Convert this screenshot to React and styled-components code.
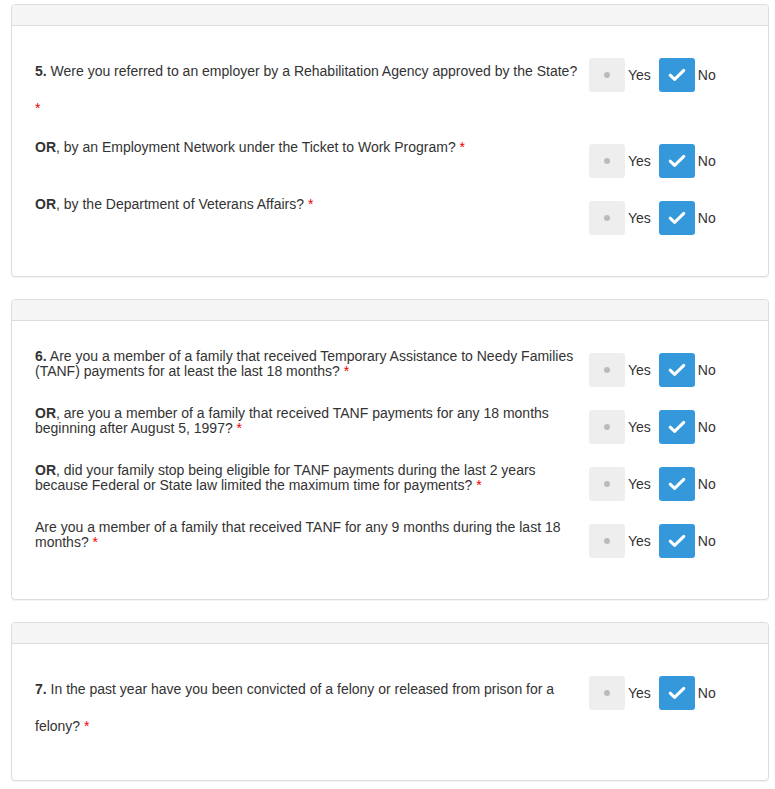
import React from "react";
import styled, { createGlobalStyle } from "styled-components";

const Global = createGlobalStyle`
  html, body { margin: 0; padding: 0; background: #fff; }
  body {
    font-family: "Liberation Sans", Arial, sans-serif;
    font-size: 14px;
    color: #333;
  }
  * { box-sizing: border-box; }
`;

const Page = styled.div`
  padding: 4px 6px 0 11px;
`;

const Panel = styled.section`
  border: 1px solid #ddd;
  border-radius: 4px;
  background: #fff;
  box-shadow: 0 1px 1px rgba(0, 0, 0, 0.05);
  margin-bottom: 22px;
  overflow: hidden;
`;

const Heading = styled.div`
  height: 21px;
  background: #f5f5f5;
  border-bottom: 1px solid #ddd;
`;

const Body = styled.div`
  padding: 27px 23px 23px 23px;
`;

const Row = styled.div`
  display: flex;
  align-items: flex-start;
  margin-bottom: 18px;
`;

const Question = styled.div`
  flex: 0 0 546px;
  width: 546px;
  line-height: ${(p) => (p.$tall ? "37px" : "15px")};
  margin-top: ${(p) => (p.$tall ? "0" : "1px")};
  margin-bottom: ${(p) => (p.$tall ? "-6px" : "0")};
`;

const Req = styled.span`
  color: #e00;
`;

const Choices = styled.div`
  display: flex;
  align-items: center;
  margin-left: 8px;
  margin-top: 5px;
  gap: 8px;
`;

const Choice = styled.label`
  display: flex;
  align-items: center;
  gap: 3px;
  line-height: 15px;
`;

const Box = styled.span`
  width: 36px;
  height: 34px;
  border-radius: 3px;
  background: ${(p) => (p.$on ? "#3498db" : "#eee")};
  display: flex;
  align-items: center;
  justify-content: center;
`;

const Dot = styled.span`
  width: 6px;
  height: 6px;
  border-radius: 50%;
  background: #bbb;
`;

const Check = () => (
  <svg width="18" height="14" viewBox="0 0 18 14" aria-hidden="true">
    <path
      d="M2.2 7.2 L6.6 11.4 L15.8 2.4"
      fill="none"
      stroke="#fff"
      strokeWidth="3"
      strokeLinecap="round"
      strokeLinejoin="round"
    />
  </svg>
);

const YesNo = () => (
  <Choices>
    <Choice>
      <Box>
        <Dot />
      </Box>
      Yes
    </Choice>
    <Choice>
      <Box $on>
        <Check />
      </Box>
      No
    </Choice>
  </Choices>
);

const Item = ({ tall, children }) => (
  <Row>
    <Question $tall={tall}>
      {children} <Req>*</Req>
    </Question>
    <YesNo />
  </Row>
);

export default function App() {
  return (
    <>
      <Global />
      <Page>
        <Panel>
          <Heading />
          <Body>
            <Item tall>
              <b>5.</b> Were you referred to an employer by a Rehabilitation Agency approved by the State?
            </Item>
            <Item>
              <b>OR</b>, by an Employment Network under the Ticket to Work Program?
            </Item>
            <Item>
              <b>OR</b>, by the Department of Veterans Affairs?
            </Item>
          </Body>
        </Panel>
        <Panel>
          <Heading />
          <Body>
            <Item>
              <b>6.</b> Are you a member of a family that received Temporary Assistance to Needy Families (TANF) payments for at least the last 18 months?
            </Item>
            <Item>
              <b>OR</b>, are you a member of a family that received TANF payments for any 18 months beginning after August 5, 1997?
            </Item>
            <Item>
              <b>OR</b>, did your family stop being eligible for TANF payments during the last 2 years because Federal or State law limited the maximum time for payments?
            </Item>
            <Item>
              Are you a member of a family that received TANF for any 9 months during the last 18 months?
            </Item>
          </Body>
        </Panel>
        <Panel>
          <Heading />
          <Body>
            <Item tall>
              <b>7.</b> In the past year have you been convicted of a felony or released from prison for a felony?
            </Item>
          </Body>
        </Panel>
      </Page>
    </>
  );
}
